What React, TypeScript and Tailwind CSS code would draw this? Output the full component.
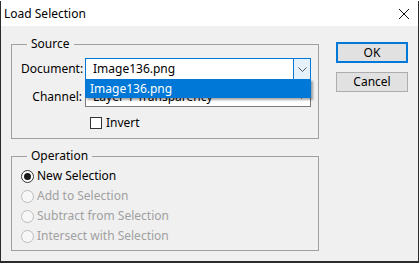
import React from 'react';

const Chevron: React.FC<{ className?: string }> = ({ className }) => (
    <svg width="9" height="5" viewBox="0 0 9 5" className={className}>
        <path d="M0.5 0.5 L4.5 4.5 L8.5 0.5" fill="none" stroke="currentColor" strokeWidth="1" />
    </svg>
);

const Radio: React.FC<{ label: string; checked?: boolean; disabled?: boolean }> = ({ label, checked, disabled }) => (
    <div className="flex items-center h-[20px]">
        <span
            className={`w-[13px] h-[13px] rounded-full border flex items-center justify-center ${
                disabled ? 'border-[#bcbcbc] bg-[#f7f7f7]' : 'border-[#333333] bg-white'
            }`}
        >
            {checked && <span className="w-[7px] h-[7px] rounded-full bg-[#1a1a1a]" />}
        </span>
        <span className={`ml-[3px] ${disabled ? 'text-[#a0a0a0]' : 'text-black'}`}>{label}</span>
    </div>
);

export default function App() {
    return (
        <div className="w-[419px] h-[263px] bg-[#2b2b2b] text-[12px] leading-[16px] text-black font-['Noto_Sans',sans-serif]">
            <div className="w-[417px] h-[260px] ml-px mt-px flex flex-col bg-[#f0f0f0]">
                {/* title bar */}
                <div className="h-[25px] bg-white flex items-center justify-between pl-[3px] pr-[9px] shrink-0">
                    <span className="text-[12px]">Load Selection</span>
                    <svg width="10" height="10" viewBox="0 0 10 10">
                        <path d="M0 0 L10 10 M10 0 L0 10" stroke="#111" strokeWidth="1" />
                    </svg>
                </div>

                <div className="flex items-start pt-[10px] pl-[10px]">
                    <div className="w-[308px] flex flex-col gap-[9px]">
                        {/* Source */}
                        <fieldset className="relative border border-[#a0a0a0] h-[103px] m-0 p-0">
                            <legend className="ml-[15px] px-[4px]">Source</legend>
                            <div className="flex items-center mt-[6px] pl-[9px]">
                                <span className="w-[64px]">Document:</span>
                                <div className="w-[226px] h-[22px] border border-[#0078d7] bg-white flex items-center">
                                    <span className="flex-1 pl-[7px]">Image136.png</span>
                                    <span className="w-[17px] h-full bg-[#e5f1fb] border-l border-[#0078d7] flex items-center justify-center text-[#555]">
                                        <Chevron />
                                    </span>
                                </div>
                            </div>
                            <div className="flex items-center mt-[6px] pl-[9px]">
                                <span className="w-[64px] text-right pr-[3px]">Channel:</span>
                                <div className="w-[226px] h-[21px] border border-[#7a7a7a] bg-white flex items-center">
                                    <span className="flex-1 pl-[7px]">Layer 1 Transparency</span>
                                    <span className="w-[17px] flex items-center justify-center text-[#555]">
                                        <Chevron />
                                    </span>
                                </div>
                            </div>
                            <div className="flex items-center mt-[8px] pl-[78px]">
                                <span className="w-[12px] h-[12px] border border-[#333] bg-white" />
                                <span className="ml-[4px]">Invert</span>
                            </div>
                            {/* open dropdown list */}
                            <div className="absolute left-[73px] top-[27px] w-[226px] h-[19px] bg-[#0078d7] text-white flex items-center pl-[5px] shadow-[2px_2px_2px_rgba(0,0,0,0.35)]">
                                Image136.png
                            </div>
                        </fieldset>

                        {/* Operation */}
                        <fieldset className="border border-[#a0a0a0] h-[103px] m-0 p-0">
                            <legend className="ml-[15px] px-[4px]">Operation</legend>
                            <div className="pl-[9px] mt-[2px] flex flex-col">
                                <Radio label="New Selection" checked />
                                <Radio label="Add to Selection" disabled />
                                <Radio label="Subtract from Selection" disabled />
                                <Radio label="Intersect with Selection" disabled />
                            </div>
                        </fieldset>
                    </div>

                    <div className="ml-[17px] mt-[6px] flex flex-col gap-[9px]">
                        <button className="w-[72px] h-[21px] border-2 border-[#0078d7] bg-[#e1e1e1] flex items-center justify-center">
                            OK
                        </button>
                        <button className="w-[72px] h-[20px] border border-[#adadad] bg-[#e1e1e1] flex items-center justify-center">
                            Cancel
                        </button>
                    </div>
                </div>
            </div>
        </div>
    );
}
